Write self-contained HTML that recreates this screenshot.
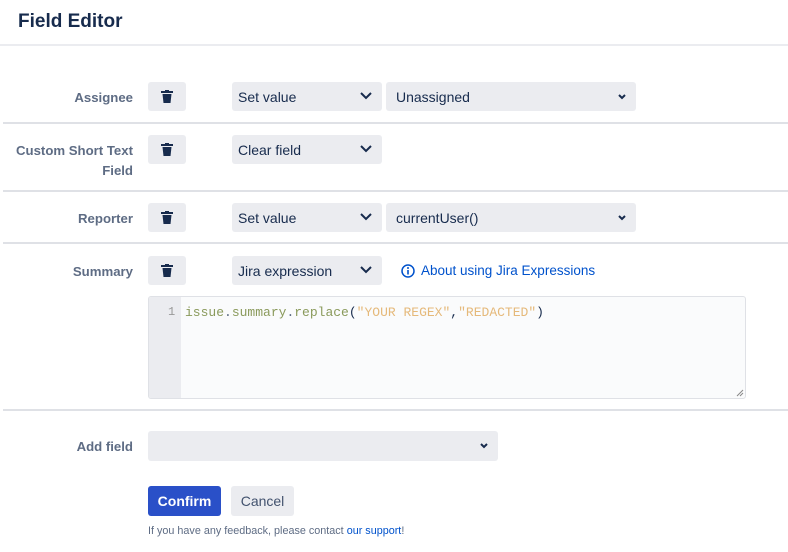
<!DOCTYPE html><html><head><style>
body{margin:0;width:788px;height:552px;background:#fff;font-family:"Liberation Sans",sans-serif;position:relative;overflow:hidden;color:#172b4d}
.a{position:absolute}
.hr{position:absolute;left:3px;width:785px;height:2px;background:#dfe1e6}
.lbl{position:absolute;right:655px;font-size:13.2px;color:#5e6c84;font-weight:bold;text-align:right;line-height:20px}
.btn{position:absolute;left:148px;width:38px;height:29px;background:#ebecf0;border-radius:3px}
.btn svg{position:absolute;left:13px;top:8px}
.sel{position:absolute;height:29px;background:#ebecf0;border-radius:3px;font-size:14px;line-height:30px;padding-left:6px;box-sizing:border-box;color:#172b4d}
.sel svg{position:absolute;right:10px;top:10px}
</style></head><body>
<div class="a" style="left:18px;top:11px;font-size:19px;font-weight:bold;color:#172b4d">Field Editor</div>
<div class="a" style="left:0;top:44px;width:788px;height:2px;background:#ebecf0"></div>

<div class="lbl" style="top:88px">Assignee</div>
<div class="btn" style="top:82px"><svg width="12" height="13" viewBox="0 0 12 13"><rect x="0" y="1" width="12" height="2" fill="#172b4d"/><rect x="4" y="0" width="4" height="2" fill="#172b4d"/><path d="M1.5 4h9l-1 9h-7z" fill="#172b4d"/></svg></div>
<div class="sel" style="left:232px;top:82px;width:150px">Set value<svg width="12" height="8" viewBox="0 0 12 8"><path d="M1 1l5 5 5-5" stroke="#172b4d" stroke-width="2" fill="none"/></svg></div>
<div class="sel" style="left:386px;top:82px;width:250px;padding-left:10px">Unassigned<svg width="8" height="6" viewBox="0 0 8 6" style="top:12px"><path d="M1 1l3 3 3-3" stroke="#172b4d" stroke-width="2" fill="none"/></svg></div>
<div class="hr" style="top:122px"></div>

<div class="lbl" style="top:141px">Custom Short Text<br>Field</div>
<div class="btn" style="top:135px"><svg width="12" height="13" viewBox="0 0 12 13"><rect x="0" y="1" width="12" height="2" fill="#172b4d"/><rect x="4" y="0" width="4" height="2" fill="#172b4d"/><path d="M1.5 4h9l-1 9h-7z" fill="#172b4d"/></svg></div>
<div class="sel" style="left:232px;top:135px;width:150px">Clear field<svg width="12" height="8" viewBox="0 0 12 8"><path d="M1 1l5 5 5-5" stroke="#172b4d" stroke-width="2" fill="none"/></svg></div>
<div class="hr" style="top:190px"></div>

<div class="lbl" style="top:209px">Reporter</div>
<div class="btn" style="top:203px"><svg width="12" height="13" viewBox="0 0 12 13"><rect x="0" y="1" width="12" height="2" fill="#172b4d"/><rect x="4" y="0" width="4" height="2" fill="#172b4d"/><path d="M1.5 4h9l-1 9h-7z" fill="#172b4d"/></svg></div>
<div class="sel" style="left:232px;top:203px;width:150px">Set value<svg width="12" height="8" viewBox="0 0 12 8"><path d="M1 1l5 5 5-5" stroke="#172b4d" stroke-width="2" fill="none"/></svg></div>
<div class="sel" style="left:386px;top:203px;width:250px;padding-left:10px">currentUser()<svg width="8" height="6" viewBox="0 0 8 6" style="top:12px"><path d="M1 1l3 3 3-3" stroke="#172b4d" stroke-width="2" fill="none"/></svg></div>
<div class="hr" style="top:242px"></div>

<div class="lbl" style="top:262px">Summary</div>
<div class="btn" style="top:256px"><svg width="12" height="13" viewBox="0 0 12 13"><rect x="0" y="1" width="12" height="2" fill="#172b4d"/><rect x="4" y="0" width="4" height="2" fill="#172b4d"/><path d="M1.5 4h9l-1 9h-7z" fill="#172b4d"/></svg></div>
<div class="sel" style="left:232px;top:256px;width:150px">Jira expression<svg width="12" height="8" viewBox="0 0 12 8"><path d="M1 1l5 5 5-5" stroke="#172b4d" stroke-width="2" fill="none"/></svg></div>
<svg class="a" style="left:401px;top:264px" width="14" height="14" viewBox="0 0 14 14"><circle cx="7" cy="7" r="6" stroke="#0052cc" stroke-width="1.5" fill="none"/><rect x="6.2" y="6" width="1.6" height="4.5" fill="#0052cc"/><circle cx="7" cy="4" r="1" fill="#0052cc"/></svg>
<div class="a" style="left:421px;top:263px;font-size:13.5px;color:#0052cc">About using Jira Expressions</div>
<div class="a" style="left:148px;top:296px;width:598px;height:103px;box-sizing:border-box;border:1px solid #dfe1e6;border-radius:3px;background:#fafbfc;overflow:hidden">
<div class="a" style="left:0;top:0;width:32px;height:103px;background:#ebecf0"></div>
<div class="a" style="left:19px;top:8px;font-family:'Liberation Mono',monospace;font-size:12px;color:#999">1</div>
<div class="a" style="left:36px;top:8px;font-family:'Liberation Mono',monospace;font-size:13px;color:#8a9a5b;white-space:pre">issue<span style="color:#5e6c84">.</span>summary<span style="color:#5e6c84">.</span>replace<span style="color:#172b4d">(</span><span style="color:#e5b97a">"YOUR REGEX"</span><span style="color:#172b4d">,</span><span style="color:#e5b97a">"REDACTED"</span><span style="color:#172b4d">)</span></div>
<svg class="a" style="right:1px;bottom:1px" width="8" height="8" viewBox="0 0 8 8"><path d="M7 1L1 7M7 4L4 7" stroke="#888" stroke-width="1"/></svg>
</div>
<div class="hr" style="top:409px"></div>

<div class="lbl" style="top:437px">Add field</div>
<div class="sel" style="left:148px;top:431px;width:350px;height:30px"><svg width="8" height="6" viewBox="0 0 8 6" style="top:12px"><path d="M1 1l3 3 3-3" stroke="#172b4d" stroke-width="2" fill="none"/></svg></div>

<div class="a" style="left:148px;top:486px;width:73px;height:30px;background:#2a50c8;border-radius:3px;color:#fff;font-weight:bold;font-size:14px;line-height:30px;text-align:center">Confirm</div>
<div class="a" style="left:231px;top:486px;width:63px;height:30px;background:#ebecf0;border-radius:3px;color:#42526e;font-size:14px;line-height:30px;text-align:center">Cancel</div>
<div class="a" style="left:148px;top:525px;font-size:10.8px;color:#5e6c84">If you have any feedback, please contact <span style="color:#0052cc">our support</span>!</div>
</body></html>
